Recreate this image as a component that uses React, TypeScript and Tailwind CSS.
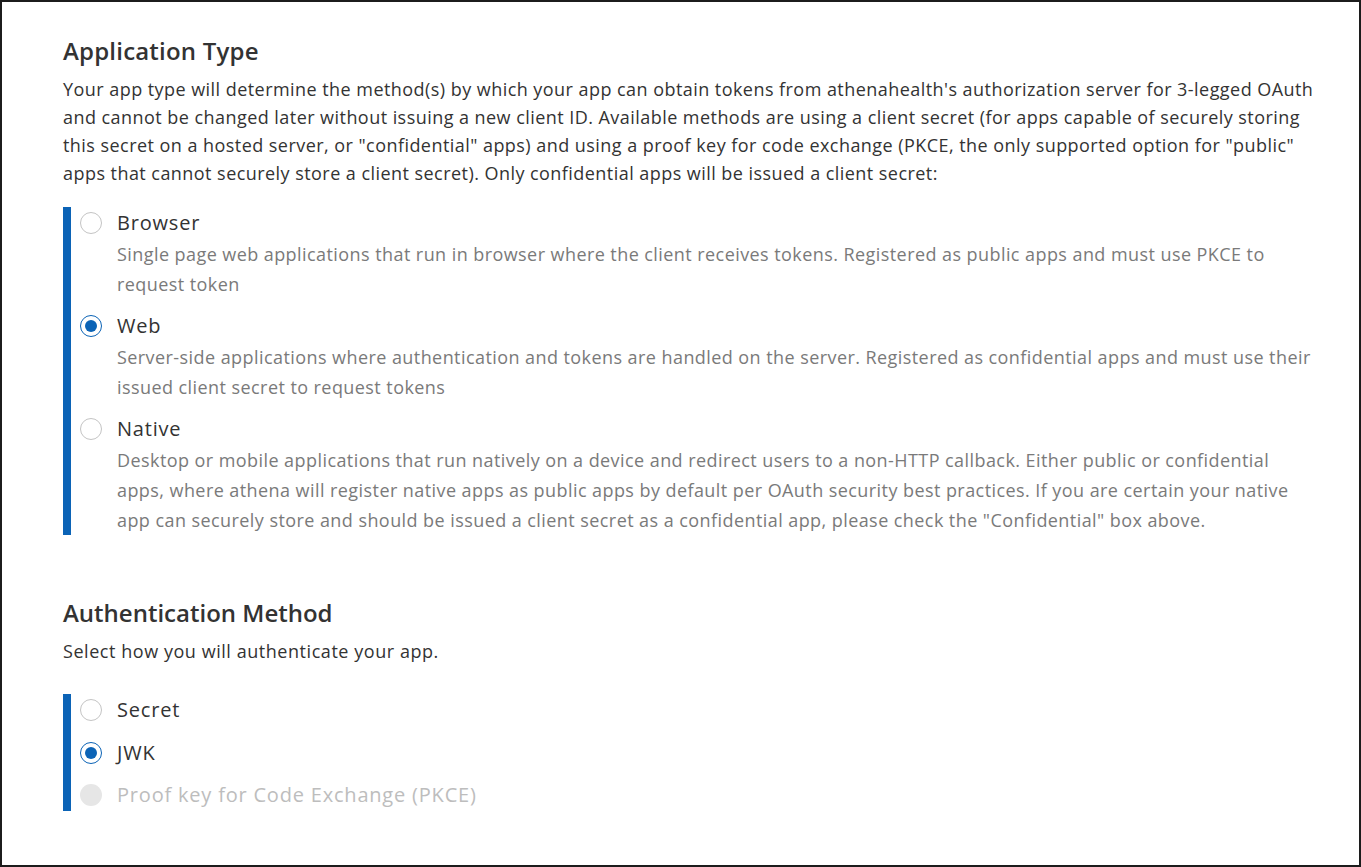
import React from 'react';

type Option = {
  label: string;
  lines?: string[];
  checked?: boolean;
  disabled?: boolean;
};

const appTypes: Option[] = [
  {
    label: 'Browser',
    lines: [
      'Single page web applications that run in browser where the client receives tokens. Registered as public apps and must use PKCE to',
      'request token',
    ],
  },
  {
    label: 'Web',
    checked: true,
    lines: [
      'Server-side applications where authentication and tokens are handled on the server. Registered as confidential apps and must use their',
      'issued client secret to request tokens',
    ],
  },
  {
    label: 'Native',
    lines: [
      'Desktop or mobile applications that run natively on a device and redirect users to a non-HTTP callback. Either public or confidential',
      'apps, where athena will register native apps as public apps by default per OAuth security best practices. If you are certain your native',
      'app can securely store and should be issued a client secret as a confidential app, please check the "Confidential" box above.',
    ],
  },
];

const authMethods: Option[] = [
  { label: 'Secret' },
  { label: 'JWK', checked: true },
  { label: 'Proof key for Code Exchange (PKCE)', disabled: true },
];

const introLines = [
  "Your app type will determine the method(s) by which your app can obtain tokens from athenahealth's authorization server for 3-legged OAuth",
  'and cannot be changed later without issuing a new client ID. Available methods are using a client secret (for apps capable of securely storing',
  'this secret on a hosted server, or "confidential" apps) and using a proof key for code exchange (PKCE, the only supported option for "public"',
  'apps that cannot securely store a client secret). Only confidential apps will be issued a client secret:',
];

const Radio: React.FC<{ checked?: boolean; disabled?: boolean }> = ({ checked, disabled }) => {
  if (disabled) {
    return <span className="w-[22px] h-[22px] rounded-full bg-[#e6e6e6] shrink-0" />;
  }
  if (checked) {
    return (
      <span className="w-[22px] h-[22px] rounded-full border-[1.5px] border-[#0b63b6] flex items-center justify-center shrink-0">
        <span className="w-[12px] h-[12px] rounded-full bg-[#0b63b6]" />
      </span>
    );
  }
  return <span className="w-[22px] h-[22px] rounded-full border-[1.5px] border-[#c4c4c4] bg-white shrink-0" />;
};

const RadioRow: React.FC<{ option: Option }> = ({ option }) => (
  <div>
    <div className="flex items-center h-[32px]">
      <Radio checked={option.checked} disabled={option.disabled} />
      <span
        className={`ml-[15px] text-[20px] leading-[32px] tracking-[0.8px] ${option.disabled ? 'text-[#bdbdbd]' : 'text-[#333333]'}`}
      >
        {option.label}
      </span>
    </div>
    {option.lines && (
      <p className="ml-[37px] text-[18px] leading-[30px] tracking-[0.43px] text-[#7a7a7a]">
        {option.lines.map((l) => (
          <span key={l} className="block whitespace-nowrap">
            {l}
          </span>
        ))}
      </p>
    )}
  </div>
);

export default function App() {
  return (
    <div
      className="w-[1361px] h-[867px] border-2 border-[#1c1c1c] bg-white box-border overflow-hidden"
      style={{ fontFamily: '"Open Sans", "Noto Sans", sans-serif' }}
    >
      <div className="pl-[61px] pr-[40px] pt-[33px]">
        {/* Application Type */}
        <h2 className="text-[24px] leading-[32px] font-semibold text-[#333333] tracking-[0.2px]">Application Type</h2>
        <p className="mt-[8px] text-[18px] leading-[28px] tracking-[0.45px] text-[#333333]">
          {introLines.map((l) => (
            <span key={l} className="block whitespace-nowrap">
              {l}
            </span>
          ))}
        </p>

        <div className="mt-[20px] flex">
          <div className="w-[8px] bg-[#0b63b6] shrink-0" />
          <div className="ml-[9px] flex flex-col gap-[11px]">
            {appTypes.map((o) => (
              <RadioRow key={o.label} option={o} />
            ))}
          </div>
        </div>

        {/* Authentication Method */}
        <h2 className="mt-[62px] text-[24px] leading-[32px] font-semibold text-[#333333]">Authentication Method</h2>
        <p className="mt-[8px] text-[18px] leading-[28px] tracking-[0.55px] text-[#333333]">
          Select how you will authenticate your app.
        </p>

        <div className="mt-[29px] flex">
          <div className="w-[8px] bg-[#0b63b6] shrink-0" />
          <div className="ml-[9px] flex flex-col gap-[10.5px]">
            {authMethods.map((o) => (
              <RadioRow key={o.label} option={o} />
            ))}
          </div>
        </div>
      </div>
    </div>
  );
}
